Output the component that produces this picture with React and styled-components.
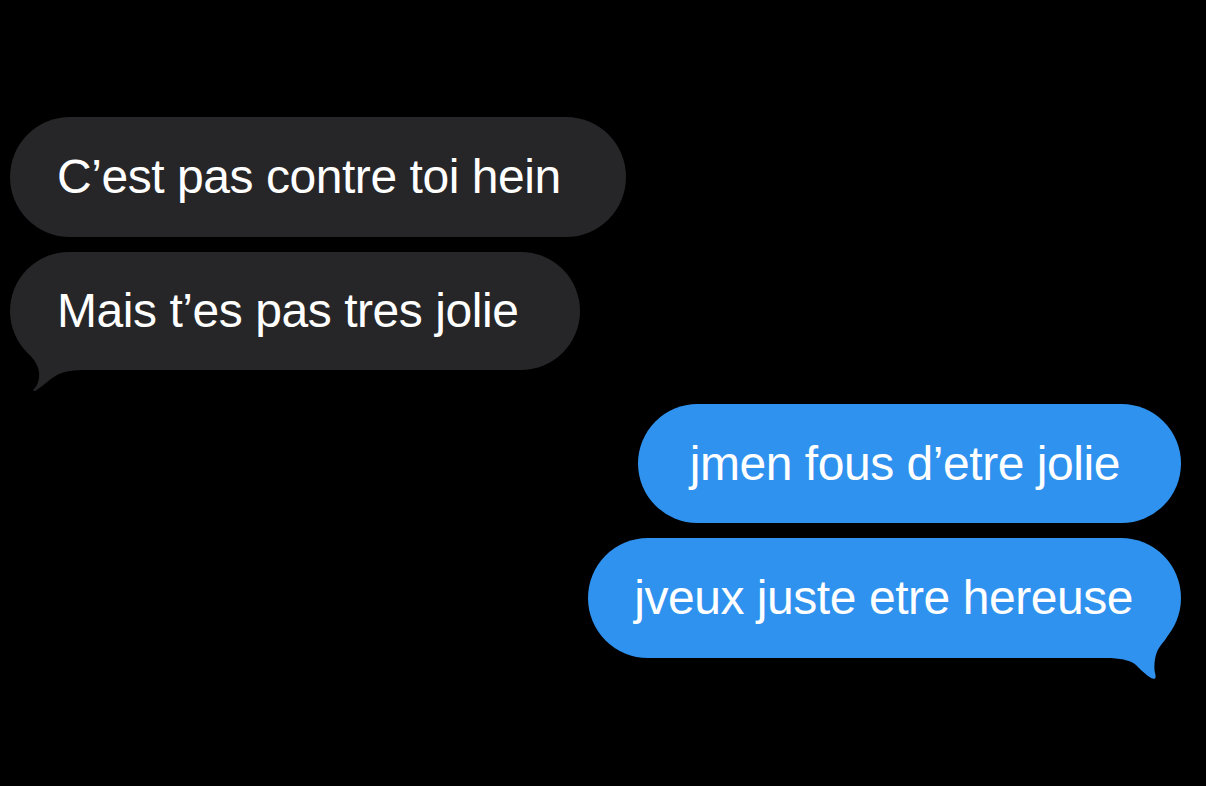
import React from 'react';
import styled, { createGlobalStyle } from 'styled-components';

const GlobalStyle = createGlobalStyle`
  html, body {
    margin: 0;
    padding: 0;
    background: #000;
  }
  body {
    font-family: "Liberation Sans", Arial, sans-serif;
    -webkit-font-smoothing: antialiased;
  }
`;

const Screen = styled.div`
  width: 1206px;
  height: 786px;
  background: #000;
  display: flex;
  flex-direction: column;
  padding: 117px 25px 0 10px;
  box-sizing: border-box;
  overflow: hidden;
`;

const Group = styled.div`
  display: flex;
  flex-direction: column;
  align-items: ${p => (p.$mine ? 'flex-end' : 'flex-start')};
  gap: 15px;
  margin-top: ${p => p.$offset || 0}px;
`;

const Bubble = styled.div`
  position: relative;
  height: ${p => p.$h || 120}px;
  display: flex;
  align-items: center;
  padding: 0 ${p => p.$pr || 58}px 0 ${p => p.$pl || 47}px;
  border-radius: 60px;
  background: ${p => (p.$mine ? '#3092ef' : '#262628')};
  color: #fff;
  font-size: 48px;
  letter-spacing: -0.45px;
  line-height: 1;
  white-space: nowrap;
  box-sizing: border-box;
`;

const Text = styled.span`
  position: relative;
  z-index: 1;
`;

const Tail = styled.svg`
  position: absolute;
  bottom: -22px;
  ${p => (p.$mine ? 'right: 0;' : 'left: 0;')}
  width: 80px;
  height: 92px;
  overflow: visible;
`;

const ThemTail = () => (
  <Tail viewBox="0 0 80 92">
    <path
      d="M1 0 C 0 22 6 40 20 55 C 27 63 30 70 29 78 C 28 84 26 87 23 90 C 24 91.5 26 91 28 89 C 34 85 40 79 47 75 C 53 72 60 70.5 72 70 L 72 0 Z"
      fill="#262628"
    />
  </Tail>
);

const MeTail = () => (
  <Tail $mine viewBox="0 0 80 92">
    <path
      d="M79 0 C 78 22 72 44 60 57 C 55 63 53 72 53.5 82 C 54 86 55.5 89 54 90.5 C 52 91.5 50 90 47 88 C 42 84 38 80 35 77 C 30 73 24 71 10 70 L 10 0 Z"
      fill="#3092ef"
    />
  </Tail>
);

export default function App() {
  return (
    <>
      <GlobalStyle />
      <Screen>
        <Group>
          <Bubble $pr={65}>C’est pas contre toi hein</Bubble>
          <Bubble $h={118} $pr={62}>
            <ThemTail />
            <Text>Mais t’es pas tres jolie</Text>
          </Bubble>
        </Group>
        <Group $mine $offset={34}>
          <Bubble $mine $h={119} $pr={61} $pl={52}>jmen fous d’etre jolie</Bubble>
          <Bubble $mine $pr={48} $pl={46}>
            <MeTail />
            <Text>jveux juste etre hereuse</Text>
          </Bubble>
        </Group>
      </Screen>
    </>
  );
}
